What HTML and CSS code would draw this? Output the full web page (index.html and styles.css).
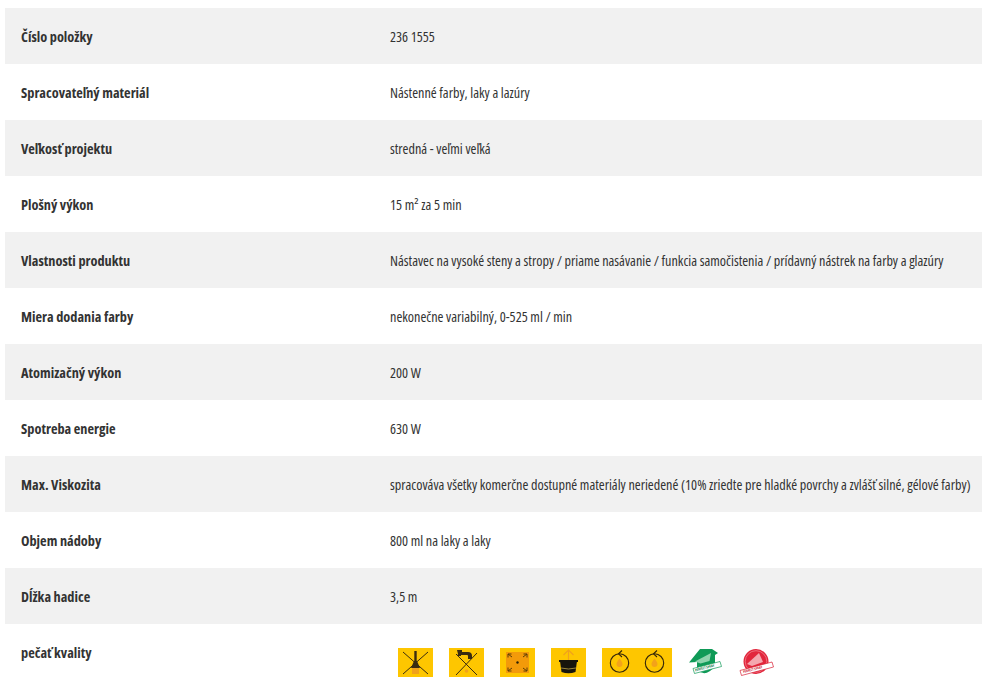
FILE: index.html
```html
<!DOCTYPE html>
<html lang="sk">
<head>
<meta charset="utf-8">
<title>Technické údaje</title>
<link rel="stylesheet" href="styles.css">
</head>
<body>
<div class="specs">
  <div class="row"><div class="label">Číslo položky</div><div class="value">236 1555</div></div>
  <div class="row"><div class="label">Spracovateľný materiál</div><div class="value">Nástenné farby, laky a lazúry</div></div>
  <div class="row"><div class="label">Veľkosť projektu</div><div class="value">stredná - veľmi veľká</div></div>
  <div class="row"><div class="label">Plošný výkon</div><div class="value">15 m² za 5 min</div></div>
  <div class="row"><div class="label">Vlastnosti produktu</div><div class="value">Nástavec na vysoké steny a stropy / priame nasávanie / funkcia samočistenia / prídavný nástrek na farby a glazúry</div></div>
  <div class="row"><div class="label">Miera dodania farby</div><div class="value">nekonečne variabilný, 0-525 ml / min</div></div>
  <div class="row"><div class="label">Atomizačný výkon</div><div class="value">200 W</div></div>
  <div class="row"><div class="label">Spotreba energie</div><div class="value">630 W</div></div>
  <div class="row"><div class="label">Max. Viskozita</div><div class="value">spracováva všetky komerčne dostupné materiály neriedené (10% zriedte pre hladké povrchy a zvlášť silné, gélové farby)</div></div>
  <div class="row"><div class="label">Objem nádoby</div><div class="value">800 ml na laky a laky</div></div>
  <div class="row"><div class="label">Dĺžka hadice</div><div class="value">3,5 m</div></div>
  <div class="row row-seals">
    <div class="label">pečať kvality</div>
    <div class="seals">
      <svg class="seal" width="35" height="29" viewBox="0 0 35 29"><rect width="35" height="29" fill="#fec600"/><rect x="14" y="20" width="7" height="6" fill="#f0a21c"/><path d="M17.500 3v11" stroke="#3a2c10" stroke-width="2.400"/><path d="M13 20l3-7h3l3 7z" fill="#3a2c10"/><path d="M5 4l25 22M30 4L5 26" stroke="#3a2c10" stroke-width="1"/></svg>
      <svg class="seal" width="35" height="29" viewBox="0 0 35 29"><rect width="35" height="29" fill="#fec600"/><path d="M8 2h5v2h6q4 0 4 4v3h-4V8q0-1-1-1h-6v1H8l1-2z" fill="#3a2c10"/><circle cx="17.500" cy="23" r="1.800" fill="#f0a21c"/><path d="M7 6l21 21M28 5L7 27" stroke="#3a2c10" stroke-width="1"/></svg>
      <svg class="seal" width="35" height="29" viewBox="0 0 35 29"><rect width="35" height="29" fill="#fec600"/><rect x="6" y="4" width="23" height="21" fill="#f39a0a"/><circle cx="17.500" cy="14.500" r="1.200" fill="#2a2008"/><path d="M12 9L8 6M8 6v3.500M8 6h3.500M23 9l4-3M27 6v3.500M27 6h-3.500M12 20l-4 3M8 23v-3.500M8 23h3.500M23 20l4 3M27 23v-3.500M27 23h-3.500" fill="none" stroke="#5a3c08" stroke-width="1"/></svg>
      <svg class="seal" width="35" height="29" viewBox="0 0 35 29"><rect width="35" height="29" fill="#fec600"/><path d="M17.500 13V2M12.500 7l5-5 5 5" fill="none" stroke="#f0a21c" stroke-width="1.200"/><path d="M9 13h17l-1.500 11q-7 2.500-14 0z" fill="#17140c"/><path d="M8 13h19" stroke="#17140c" stroke-width="2"/><path d="M10 20q7.500 2 15 0" fill="none" stroke="#bda244" stroke-width=".800"/></svg>
      <svg class="seal" width="70" height="29" viewBox="0 0 70 29"><rect width="70" height="29" fill="#fec600"/><g fill="none" stroke="#33260a" stroke-width="1.100"><circle cx="17.500" cy="15" r="9.200"/><path d="M20 2.500l-3.500 3.300 3.500 3.200"/><circle cx="52.500" cy="15" r="9.200"/><path d="M55 2.500l-3.500 3.300 3.500 3.200"/></g><path d="M17.500 10.500q3 3.500 3 5.500a3 3 0 0 1-6 0q0-2 3-5.500zM52.500 10.500q3 3.500 3 5.500a3 3 0 0 1-6 0q0-2 3-5.500z" fill="#f3a31a"/></svg>
      <svg class="seal" width="35" height="29" viewBox="0 0 35 29"><path d="M1 14.500L12 1h12l6 4-3 2v11q-9 12-18 4v-8z" fill="#0f9a57"/><path d="M7 13.500L23 5l-1.500 8-9 2.500z" fill="#8fd4ae"/><path d="M5 20.500l27-7 1.500 5-27 7z" fill="#fff" stroke="#0f9a57" stroke-width=".700"/><text class="seal-text seal-text-green" transform="translate(7.500 23.400) rotate(-14.500)">PERFECT SPRAY</text></svg>
      <svg class="seal" width="35" height="29" viewBox="0 0 35 29"><circle cx="17" cy="13.500" r="12.500" fill="#e2263c"/><circle cx="17" cy="13.500" r="10.800" fill="none" stroke="#f6b3ba" stroke-width=".500"/><path d="M8 16L20 5l4 9-11 4z" fill="#f4a7af"/><path d="M1 22.500l32-8.500 1.500 5-32 8.500z" fill="#fff" stroke="#d81e34" stroke-width=".700"/><text class="seal-text seal-text-red" transform="translate(4.500 25) rotate(-14.500)">PERFECT SPRAY</text></svg>
    </div>
  </div>
</div>
</body>
</html>
```
FILE: styles.css
```css
html, body { background: #fff; }
body {
  margin: 8px 0 0 5px;
  font-family: "Open Sans", "Liberation Sans", sans-serif;
  font-size: 14.2px;
  font-stretch: 75%;
  color: #333;
  overflow: hidden;
}
.specs { display: flex; flex-direction: column; }
.row {
  display: grid;
  grid-template-columns: 385px 1fr;
  height: 56px;
  align-items: center;
}
.row:nth-child(odd) { background: #f1f1f1; }
.label {
  padding-left: 16px;
  font-size: 14.3px;
  font-weight: 700;
  white-space: nowrap;
}
.value { white-space: nowrap; }
.seals {
  display: flex;
  gap: 16px;
  padding: 24px 0 3px 8px;
  align-self: stretch;
}
.seal { display: block; flex: none; }
.seal-text {
  font-family: "Open Sans", "Liberation Sans", sans-serif;
  font-size: 3.400px;
  font-weight: 700;
}
.seal-text-green { fill: #0f7a48; }
.seal-text-red { fill: #c8182c; }
```
